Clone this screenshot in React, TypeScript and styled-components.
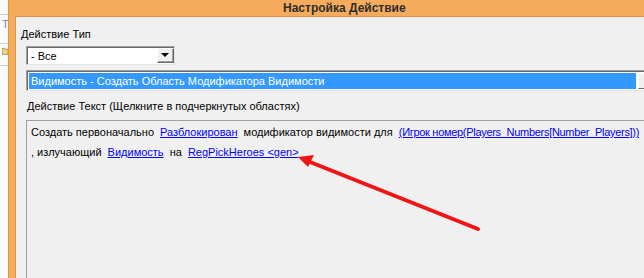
import React from 'react';
import styled, { createGlobalStyle } from 'styled-components';

const GlobalStyle = createGlobalStyle`
  html, body {
    margin: 0;
    padding: 0;
    background: #f0f0f0;
  }
  body {
    font-family: "Liberation Sans", Arial, sans-serif;
    font-size: 11px;
    color: #000;
  }
`;

const Screen = styled.div`
  position: relative;
  width: 644px;
  height: 278px;
  overflow: hidden;
  display: flex;
  background: #f0f0f0;
`;

// кусок окна, что лежит под диалогом
const BackWindow = styled.div`
  width: 8px;
  flex: none;
  display: flex;
  flex-direction: column;
  background: #fbfbfb;
  overflow: hidden;
`;

const BackRow = styled.div<{ $h: number; $line?: boolean }>`
  height: ${p => p.$h}px;
  flex: none;
  border-bottom: ${p => (p.$line ? '1px solid #cfcfcf' : 'none')};
  display: flex;
  align-items: center;
  color: #7089a8;
  font-size: 11px;
  padding-left: 2px;
`;

const Frame = styled.div`
  width: 636px;
  flex: none;
  overflow: hidden;
  display: flex;
  flex-direction: column;
  background: #f5ab5c;
  border-left: 1px solid #de9548;
`;

// окно шире скриншота, поэтому заголовок не по центру видимой части
const TitleBar = styled.div`
  height: 16px;
  flex: none;
  display: flex;
  align-items: center;
  padding-left: 274px;
  font-weight: bold;
  font-size: 12px;
  color: #2e2e2e;
  white-space: nowrap;
`;

const Body = styled.div`
  flex: 1;
  margin-left: 6px;
  border-left: 1px solid #dc9246;
  border-top: 1px solid #dc9246;
  background: #f0f0f0;
  padding: 10px 0 0 5px;
  display: flex;
  flex-direction: column;
`;

const Label = styled.div<{ $top?: number; $left?: number }>`
  height: 15px;
  line-height: 15px;
  margin-top: ${p => p.$top ?? 0}px;
  margin-left: ${p => p.$left ?? 0}px;
  white-space: nowrap;
`;

const Combo = styled.div`
  margin: 4px 0 0 5px;
  width: 149px;
  height: 19px;
  box-sizing: border-box;
  display: flex;
  background: #fff;
  border: 1px solid #a0a0a0;
  border-right-color: #e3e3e3;
  border-bottom-color: #e3e3e3;
  box-shadow: inset 1px 1px 0 #696969;
`;

const ComboText = styled.div`
  flex: 1;
  padding: 2px 0 0 4px;
  line-height: 14px;
`;

const DropButton = styled.div`
  width: 17px;
  height: 15px;
  margin: 1px 0 0 0;
  box-sizing: border-box;
  background: #f0f0f0;
  border: 1px solid #fff;
  border-right-color: #696969;
  border-bottom-color: #696969;
  box-shadow: inset -1px -1px 0 #a0a0a0;
  display: flex;
  align-items: center;
  justify-content: center;
  &::after {
    content: '';
    border-left: 4px solid transparent;
    border-right: 4px solid transparent;
    border-top: 4px solid #000;
    margin: 0 1px 1px 0;
  }
`;

const ListBox = styled.div`
  margin: 5px 0 0 5px;
  width: 640px;
  height: 21px;
  flex: none;
  box-sizing: border-box;
  display: flex;
  background: #fff;
  border: 1px solid #a0a0a0;
  border-bottom-color: #e3e3e3;
  box-shadow: inset 1px 1px 0 #696969;
  padding: 2px 0 0 2px;
`;

const ListItem = styled.div`
  width: 608px;
  height: 17px;
  flex: none;
  box-sizing: border-box;
  background: #3399ff;
  color: #fff;
  line-height: 16px;
  padding-left: 2px;
  white-space: nowrap;
  border-right: 1px solid #fff;
  border-bottom: 1px solid #fff;
`;

const ScrollBar = styled.div`
  width: 16px;
  height: 16px;
  margin-left: 1px;
  flex: none;
  box-sizing: border-box;
  background: #f0f0f0;
  border: 1px solid #fff;
  border-right-color: #696969;
  border-bottom-color: #696969;
`;

const TextPanel = styled.div`
  flex: 1;
  margin: 6px 0 0 5px;
  border-top: 1px solid #a0a0a0;
  border-left: 1px solid #a0a0a0;
  padding: 1px 0 0 4px;
`;

const Line = styled.div`
  height: 20px;
  line-height: 20px;
  white-space: nowrap;
`;

const Link = styled.span<{ $tight?: boolean }>`
  color: #0000ff;
  text-decoration: underline;
  margin: 0 3px 0 3px;
  letter-spacing: ${p => (p.$tight ? '-0.3px' : 'normal')};
`;

const ArrowLayer = styled.svg`
  position: absolute;
  left: 0;
  top: 0;
  pointer-events: none;
`;

const Folder = () => (
  <svg width="9" height="12" viewBox="0 0 9 12">
    <path d="M0 2 H4 L5 3.5 H9 V11 H0 Z" fill="#f3d67a" stroke="#8a7440" strokeWidth="1" />
  </svg>
);

const Arrow = () => (
  <ArrowLayer width="644" height="278" viewBox="0 0 644 278">
    <line x1="478" y1="229" x2="310" y2="162" stroke="#f01414" strokeWidth="4" strokeLinecap="round" />
    <polygon points="298,157 314,155 308,167" fill="#f01414" />
  </ArrowLayer>
);

export default function App() {
  return (
    <>
      <GlobalStyle />
      <Screen>
        <BackWindow>
          <BackRow $h={14} $line />
          <BackRow $h={18}>T</BackRow>
          <BackRow $h={10} $line />
          <BackRow $h={13}>
            <Folder />
          </BackRow>
          <BackRow $h={8} $line />
        </BackWindow>
        <Frame>
          <TitleBar>Настройка Действие</TitleBar>
          <Body>
            <Label>Действие Тип</Label>
            <Combo>
              <ComboText>- Все</ComboText>
              <DropButton />
            </Combo>
            <ListBox>
              <ListItem>Видимость - Создать Область Модификатора Видимости</ListItem>
              <ScrollBar />
            </ListBox>
            <Label $top={8} $left={6}>Действие Текст (Щелкните в подчеркнутых областях)</Label>
            <TextPanel>
              <Line>
                Создать первоначально <Link>Разблокирован</Link> модификатор видимости для{' '}
                <Link $tight>(Игрок номер(Players_Numbers[Number_Players]))</Link>
              </Line>
              <Line>
                , излучающий <Link>Видимость</Link> на <Link>RegPickHeroes &lt;gen&gt;</Link>
              </Line>
            </TextPanel>
          </Body>
        </Frame>
        <Arrow />
      </Screen>
    </>
  );
}
